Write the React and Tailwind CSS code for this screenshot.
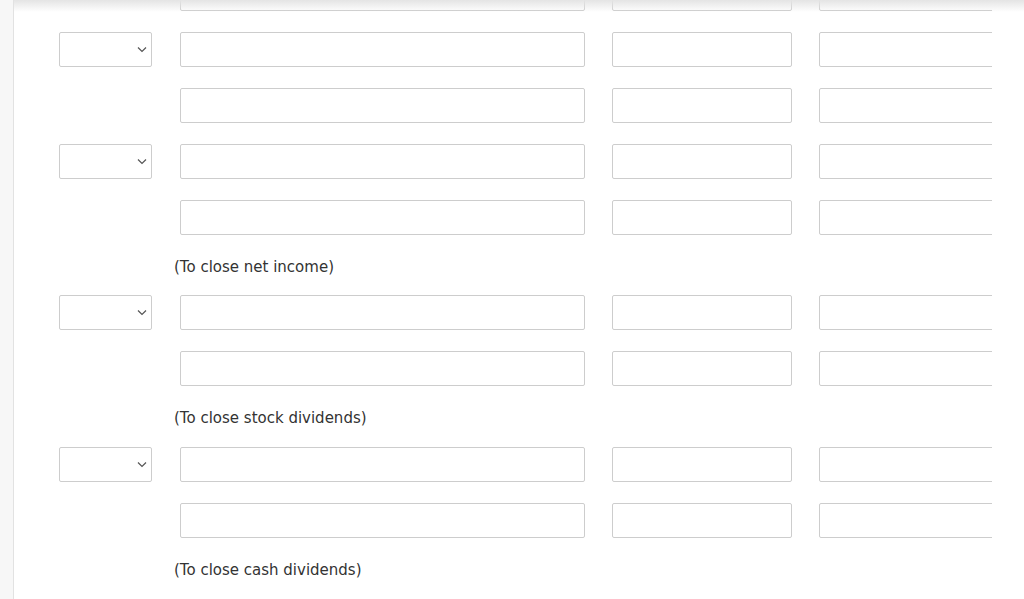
import React from "react";

function Select() {
  return (
    <div className="relative w-[93px] h-[35px] shrink-0 border border-[#cdcdcd] rounded-[2px] bg-white">
      <svg className="absolute right-[4px] top-[13px]" width="10" height="7" viewBox="0 0 10 7">
        <polyline points="1,1.5 5,5.5 9,1.5" fill="none" stroke="#555" strokeWidth="1.2" />
      </svg>
    </div>
  );
}

function Inputs() {
  return (
    <>
      <div className="ml-[28px] w-[405px] h-[35px] shrink-0 border border-[#cdcdcd] rounded-[2px] bg-white" />
      <div className="ml-[27px] w-[180px] h-[35px] shrink-0 border border-[#cdcdcd] rounded-[2px] bg-white" />
      <div className="ml-[27px] w-[200px] h-[35px] shrink-0 border border-[#cdcdcd] rounded-[2px] bg-white" />
    </>
  );
}

function Row({ select }) {
  return (
    <div className="flex items-start pl-[45px]">
      {select ? <Select /> : <div className="w-[93px] shrink-0" />}
      <Inputs />
    </div>
  );
}

function Label({ children, tall }) {
  return (
    <div className={tall ? "pl-[160px] h-[19px]" : "pl-[160px] h-[18px]"}>
      <div className="pt-[2px] leading-[18px] text-[15px] text-[#333]">{children}</div>
    </div>
  );
}

export default function App() {
  return (
    <div className="w-[1024px] h-[599px] overflow-hidden flex bg-white" style={{ fontFamily: "Tahoma, 'DejaVu Sans', Verdana, sans-serif" }}>
      <div className="w-[14px] shrink-0 bg-[#f7f7f7] border-r border-[#e2e2e2]" />
      <div className="relative flex-1">
        <div className="w-[978px] h-full overflow-hidden">
          <div className="-mt-[24px] flex flex-col gap-[21px]">
            <Row />
            <Row select />
            <Row />
            <Row select />
            <Row />
            <Label>(To close net income)</Label>
            <Row select />
            <Row />
            <Label tall>(To close stock dividends)</Label>
            <Row select />
            <Row />
            <Label>(To close cash dividends)</Label>
          </div>
        </div>
        <div className="absolute left-0 right-0 top-0 h-[12px] bg-gradient-to-b from-[#e4e4e4] to-transparent" />
      </div>
    </div>
  );
}
